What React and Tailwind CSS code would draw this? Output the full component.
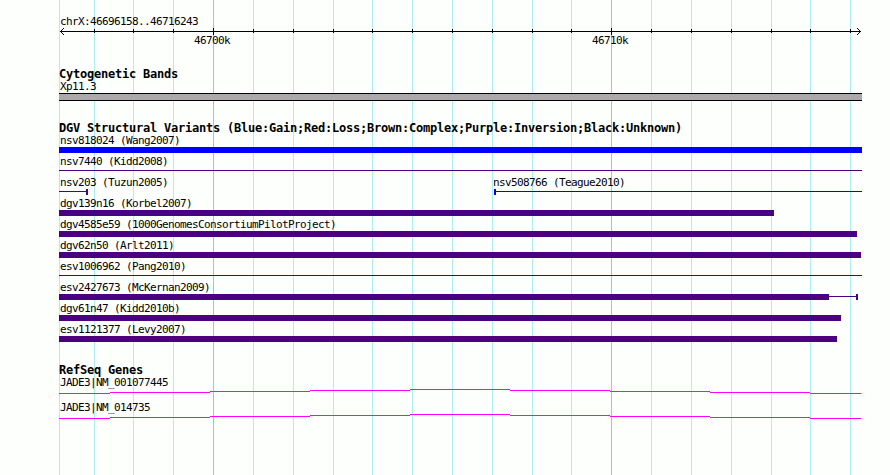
import React from "react";

const LABEL_FONT =
  "font-['DejaVu_Sans_Mono',monospace] h-3 text-[11px] leading-[14px] tracking-[-0.622px] whitespace-pre text-black";
const TITLE_FONT =
  "font-['DejaVu_Sans_Mono',monospace] h-3 text-[12px] leading-3 tracking-[-0.224px] font-bold whitespace-pre text-black";

const INDIGO = "#4b0082";
const BLUE = "#0000ff";
const WIDTH = 803;

// x offsets are relative to the left edge of the panel
const MINOR = [0, 35, 74, 114, 194, 234, 274, 313, 353, 393, 433, 473, 512, 592, 632, 672, 712, 751, 791];
const MAJOR = [154, 552];

const VARIANTS = [
  [{ label: "nsv818024 (Wang2007)", color: BLUE, box: [0, 803] }],
  [{ label: "nsv7440 (Kidd2008)", color: INDIGO, line: [0, 803] }],
  [
    { label: "nsv203 (Tuzun2005)", color: INDIGO, line: [0, 28], cap: 27 },
    { label: "nsv508766 (Teague2010)", color: BLUE, line: [435, 803], cap: 435 },
  ],
  [{ label: "dgv139n16 (Korbel2007)", color: INDIGO, box: [0, 715] }],
  [{ label: "dgv4585e59 (1000GenomesConsortiumPilotProject)", color: INDIGO, box: [0, 798] }],
  [{ label: "dgv62n50 (Arlt2011)", color: INDIGO, box: [0, 802] }],
  [{ label: "esv1006962 (Pang2010)", color: INDIGO, line: [0, 803] }],
  [{ label: "esv2427673 (McKernan2009)", color: INDIGO, box: [0, 770], line: [770, 798], cap: 797 }],
  [{ label: "dgv61n47 (Kidd2010b)", color: INDIGO, box: [0, 782] }],
  [{ label: "esv1121377 (Levy2007)", color: INDIGO, box: [0, 778] }],
];

const GENES = ["JADE3|NM_001077445", "JADE3|NM_014735"];

// [start, end, y] steps of the shallow intron arc
const INTRON = [
  [0, 51, 5],
  [51, 151, 4],
  [151, 251, 3],
  [251, 351, 2],
  [351, 451, 1],
  [451, 551, 2],
  [551, 651, 3],
  [651, 751, 4],
  [751, 802, 5],
];

function Gridlines() {
  return (
    <svg
      className="absolute top-0 left-[59px]"
      width={WIDTH}
      height="475"
      shapeRendering="crispEdges"
    >
      {MINOR.map((x) => (
        <rect key={x} x={x} y="0" width="1" height="475" fill="#afeeee" />
      ))}
      {MAJOR.map((x) => (
        <rect key={x} x={x} y="0" width="1" height="475" fill="#87ceeb" />
      ))}
    </svg>
  );
}

function Ruler() {
  return (
    <header className="pt-[15px]">
      <div className={`${LABEL_FONT} pl-px`}>chrX:46696158..46716243</div>
      <svg
        className="block overflow-visible"
        width={WIDTH}
        height="7"
        shapeRendering="crispEdges"
      >
        <rect x="1" y="4" width="801" height="1" />
        {MINOR.slice(1).map((x) => (
          <rect key={x} x={x} y="2" width="1" height="4" />
        ))}
        {MAJOR.map((x) => (
          <rect key={x} x={x} y="1" width="1" height="7" />
        ))}
        {[1, 2, 3].map((d) => (
          <g key={d}>
            <rect x={1 + d} y={4 - d} width="1" height="1" />
            <rect x={1 + d} y={4 + d} width="1" height="1" />
            <rect x={801 - d} y={4 - d} width="1" height="1" />
            <rect x={801 - d} y={4 + d} width="1" height="1" />
          </g>
        ))}
      </svg>
      <div className={`${LABEL_FONT} flex pl-[135px]`}>
        <span className="w-[398px]">46700k</span>
        <span>46710k</span>
      </div>
    </header>
  );
}

function VariantRow({ items }) {
  return (
    <div className="h-[21px]">
      <div className={`${LABEL_FONT} flex pl-px`}>
        {items.map((v) => (
          <span key={v.label} className="w-[433px] shrink-0">
            {v.label}
          </span>
        ))}
      </div>
      <svg className="block" width={WIDTH} height="9" shapeRendering="crispEdges">
        {items.map((v) => (
          <g key={v.label} fill={v.color}>
            {v.box && <rect x={v.box[0]} y="1" width={v.box[1] - v.box[0]} height="6" />}
            {v.line && <rect x={v.line[0]} y="3" width={v.line[1] - v.line[0]} height="1" />}
            {v.cap !== undefined && <rect x={v.cap} y="1" width="2" height="6" />}
          </g>
        ))}
      </svg>
    </div>
  );
}

function GeneRow({ name }) {
  return (
    <div className="h-[25px]">
      <div className={`${LABEL_FONT} pl-px`}>{name}</div>
      <svg className="block" width={WIDTH} height="13" shapeRendering="crispEdges">
        {INTRON.map(([start, end, y]) => (
          <rect key={start} x={start} y={y} width={end - start} height="1" fill="#ff00ff" />
        ))}
      </svg>
    </div>
  );
}

function App() {
  return (
    <div className="relative w-[890px] h-[475px] overflow-hidden bg-[#fdfffd]">
      <Gridlines />
      <main className="relative ml-[59px] w-[803px] flex flex-col">
        <Ruler />

        <section className="mt-[22px]">
          <h2 className={TITLE_FONT}>Cytogenetic Bands</h2>
          <div className={`${LABEL_FONT} pl-px`}>Xp11.3</div>
          <div className="mt-px h-2 border-y border-black bg-[#aca8ac]"></div>
        </section>

        <section className="mt-[21px]">
          <h2 className={TITLE_FONT}>
            DGV Structural Variants (Blue:Gain;Red:Loss;Brown:Complex;Purple:Inversion;Black:Unknown)
          </h2>
          {VARIANTS.map((items) => (
            <VariantRow key={items[0].label} items={items} />
          ))}
        </section>

        <section className="mt-5">
          <h2 className={TITLE_FONT}>RefSeq Genes</h2>
          {GENES.map((name) => (
            <GeneRow key={name} name={name} />
          ))}
        </section>
      </main>
    </div>
  );
}

export default App;
